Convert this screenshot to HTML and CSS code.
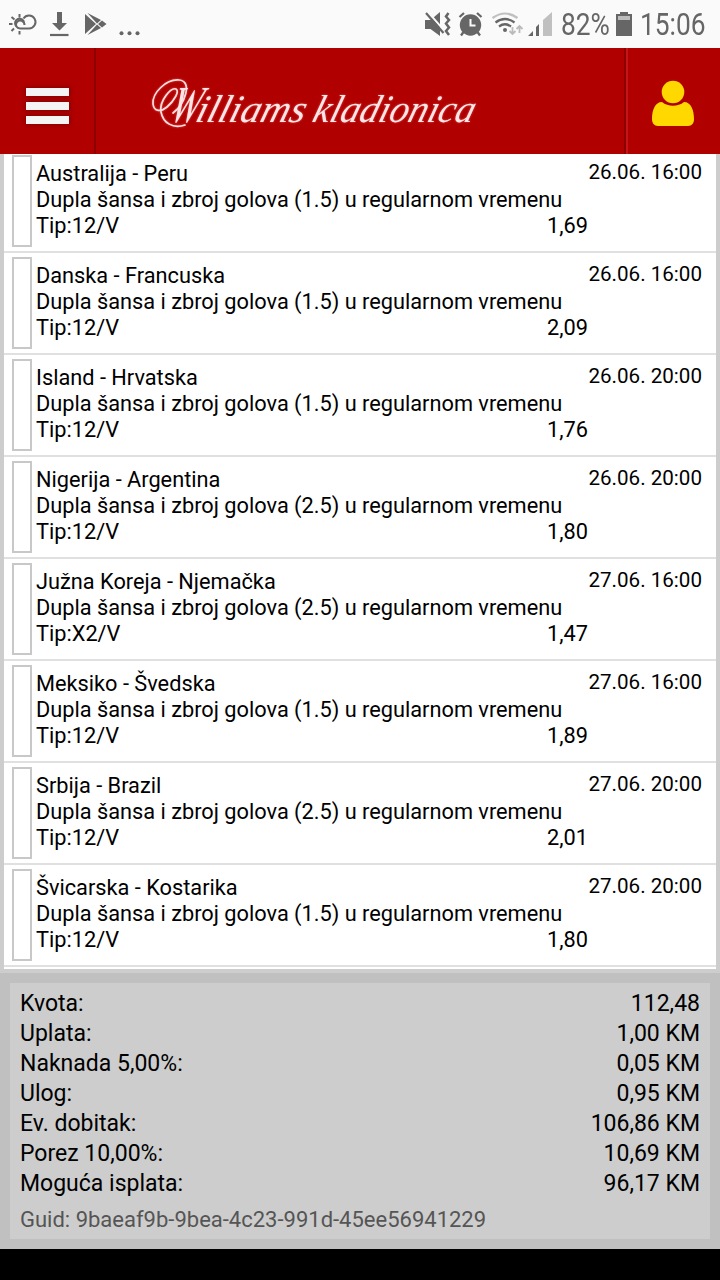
FILE: index.html
```
<!DOCTYPE html>
<html lang="hr">
<head>
    <meta charset="UTF-8">
    <meta name="viewport" content="width=device-width, initial-scale=1.0">
    <title>Williams kladionica</title>
    <link rel="stylesheet" href="styles.css">
</head>
<body>
    <div class="status-bar">
        <svg class="status-left" width="150" height="48" viewBox="0 0 150 48" fill="none" stroke="#666">
            <!-- weather -->
            <path d="M16 26a4.500 4.500 0 1 1 8 -3M19.500 14v3.500M11.500 17l3 2.500M9 24h3.500M11.500 31l2.500-2.500M19.500 31v3.500" stroke-width="2"/>
            <path d="M24.500 25a4.300 4.300 0 0 0-7.500-3c-2.500 3.500 0 6.500 3 6.500h9a6.500 6.500 0 1 0-5.500-10" stroke-width="2"/>
            <!-- download -->
            <path d="M57 12h5v11h5l-7.500 7.500-7.500-7.500h5z" fill="#666" stroke="none"/>
            <path d="M50 35h18.500" stroke-width="2.200"/>
            <!-- play store -->
            <path d="M85 14l11 10-11 10zM87.500 13l13.500 7-4 3.500zM87.500 35l13.500-7-4-3.500zM98 24l4-3.500 4.500 3.500-4.500 3.500z" fill="#666" stroke="none"/>
            <g fill="#666" stroke="none"><circle cx="121.500" cy="33.300" r="2"/><circle cx="129.500" cy="33.300" r="2"/><circle cx="137.500" cy="33.300" r="2"/></g>
        </svg>
        <div class="status-right">
            <svg width="136" height="48" viewBox="420 0 136 48" fill="#666">
                <!-- muted, vibrating -->
                <path d="M425 20h5.500l9.500-8v24l-9.500-7h-5.500z"/>
                <path d="M427.500 11.500l17 19.500" stroke="#fafafa" stroke-width="2"/>
                <path d="M426 13l17.500 20" stroke="#666" stroke-width="2.200"/>
                <path d="M448.500 13l-2.500 3.500 3 3.500-3 3.500 3 4-3 3.500 3 4" fill="none" stroke="#666" stroke-width="2.500"/>
                <!-- alarm -->
                <circle cx="470.500" cy="25" r="10.700"/>
                <path d="M459.500 17l4.500-4M481.500 17l-4.500-4M463.500 32l-2.500 3.500M477.500 32l2.500 3.500" stroke="#666" stroke-width="2.300"/>
                <path d="M470.500 19v6.500h5" fill="none" stroke="#fafafa" stroke-width="2"/>
                <!-- wifi -->
                <g fill="none" stroke-width="2.200">
                    <path d="M492.500 18q12.500-9 25 0" stroke="#c0c0c0"/>
                    <path d="M495.500 22.500q9.500-7 19 0M499 26.500q6-4.500 12 0" stroke="#666"/>
                    <path d="M512.500 27v7m-3-3l3 3 3-3M519.500 33v-7m-3 3l3-3 3 3" stroke="#bbb" stroke-width="1.800"/>
                </g>
                <circle cx="505" cy="30" r="2"/>
                <!-- signal -->
                <path d="M528 36l5-5v5zM536 36v-9l3-3v12z"/>
                <path d="M543 36V20l9-8v24z" fill="#c0c0c0"/>
            </svg>
            <span class="status-text battery-text">82%</span>
            <svg class="battery" width="17" height="48" viewBox="615 0 17 48">
                <path d="M616 14h4v-2h8v2h4v22h-16z" fill="#666"/>
                <path d="M618 16h12v4h-12z" fill="#bbb"/>
            </svg>
            <span class="status-text clock">15:06</span>
        </div>
    </div>

    <header class="header">
        <div class="menu-button">
            <div class="menu-bar"></div>
            <div class="menu-bar"></div>
            <div class="menu-bar"></div>
        </div>
        <div class="brand">
            <svg class="logo" width="340" height="66" viewBox="145 68 340 66">
                <!-- swash round the capital -->
                <path d="M173 113c12-9 20-32 6-33-13-1-27 13-26 24 1 8 8 8 14 3 7-6 13-16 9-18-5-2-17 12-15 23 2 11 12 17 24 13" fill="none" stroke="#ffe0e0" stroke-width="1.700" stroke-linecap="round"/>
                <g transform="translate(0 122) skewX(-16)">
                    <text x="168" y="0" class="logo-text capital" textLength="29" lengthAdjust="spacingAndGlyphs">W</text>
                    <text x="194" y="0" class="logo-text" textLength="109" lengthAdjust="spacingAndGlyphs">illiams</text>
                    <text x="311" y="0" class="logo-text" textLength="161" lengthAdjust="spacingAndGlyphs">kladionica</text>
                </g>
            </svg>
        </div>
        <div class="user-button">
            <svg width="46" height="50" viewBox="650 78 46 50" fill="#ffd800">
                <path d="M662 102c-7 0-10 8-10 17 0 4 2 7 6 7h30c4 0 6-3 6-7 0-9-3-17-10-17-6 5-16 5-22 0z"/>
                <circle cx="673" cy="92" r="12.300" fill="#b00000"/>
                <circle cx="673" cy="92" r="11.300"/>
            </svg>
        </div>
    </header>

    <main class="bets">
        <div class="bet">
            <div class="mark"></div>
            <div class="info"><div>Australija - Peru</div><div>Dupla šansa i zbroj golova (1.5) u regularnom vremenu</div><div class="tip"><span>Tip:12/V</span><span>1,69</span></div></div>
            <div class="date">26.06. 16:00</div>
        </div>
        <div class="bet">
            <div class="mark"></div>
            <div class="info"><div>Danska - Francuska</div><div>Dupla šansa i zbroj golova (1.5) u regularnom vremenu</div><div class="tip"><span>Tip:12/V</span><span>2,09</span></div></div>
            <div class="date">26.06. 16:00</div>
        </div>
        <div class="bet">
            <div class="mark"></div>
            <div class="info"><div>Island - Hrvatska</div><div>Dupla šansa i zbroj golova (1.5) u regularnom vremenu</div><div class="tip"><span>Tip:12/V</span><span>1,76</span></div></div>
            <div class="date">26.06. 20:00</div>
        </div>
        <div class="bet">
            <div class="mark"></div>
            <div class="info"><div>Nigerija - Argentina</div><div>Dupla šansa i zbroj golova (2.5) u regularnom vremenu</div><div class="tip"><span>Tip:12/V</span><span>1,80</span></div></div>
            <div class="date">26.06. 20:00</div>
        </div>
        <div class="bet">
            <div class="mark"></div>
            <div class="info"><div>Južna Koreja - Njemačka</div><div>Dupla šansa i zbroj golova (2.5) u regularnom vremenu</div><div class="tip"><span>Tip:X2/V</span><span>1,47</span></div></div>
            <div class="date">27.06. 16:00</div>
        </div>
        <div class="bet">
            <div class="mark"></div>
            <div class="info"><div>Meksiko - Švedska</div><div>Dupla šansa i zbroj golova (1.5) u regularnom vremenu</div><div class="tip"><span>Tip:12/V</span><span>1,89</span></div></div>
            <div class="date">27.06. 16:00</div>
        </div>
        <div class="bet">
            <div class="mark"></div>
            <div class="info"><div>Srbija - Brazil</div><div>Dupla šansa i zbroj golova (2.5) u regularnom vremenu</div><div class="tip"><span>Tip:12/V</span><span>2,01</span></div></div>
            <div class="date">27.06. 20:00</div>
        </div>
        <div class="bet">
            <div class="mark"></div>
            <div class="info"><div>Švicarska - Kostarika</div><div>Dupla šansa i zbroj golova (1.5) u regularnom vremenu</div><div class="tip"><span>Tip:12/V</span><span>1,80</span></div></div>
            <div class="date">27.06. 20:00</div>
        </div>
    </main>

    <section class="summary">
        <div class="summary-box">
            <div class="line"><span>Kvota:</span><span>112,48</span></div>
            <div class="line"><span>Uplata:</span><span>1,00 KM</span></div>
            <div class="line"><span>Naknada 5,00%:</span><span>0,05 KM</span></div>
            <div class="line"><span>Ulog:</span><span>0,95 KM</span></div>
            <div class="line"><span>Ev. dobitak:</span><span>106,86 KM</span></div>
            <div class="line"><span>Porez 10,00%:</span><span>10,69 KM</span></div>
            <div class="line"><span>Moguća isplata:</span><span>96,17 KM</span></div>
            <div class="guid">Guid: 9baeaf9b-9bea-4c23-991d-45ee56941229</div>
        </div>
    </section>
</body>
</html>
```
FILE: styles.css
```
* {
    box-sizing: border-box;
}
body {
    margin: 0;
    width: 720px;
    height: 1280px;
    overflow: hidden;
    background-color: #000;
    color: #000;
    font-family: Roboto, sans-serif;
}
svg {
    display: block;
}
.status-bar {
    height: 48px;
    background-color: #fafafa;
    display: flex;
    justify-content: space-between;
}
.status-right {
    display: flex;
    width: 300px;
}
.status-text {
    color: #666;
    font-size: 31px;
    line-height: 50px;
    white-space: nowrap;
    transform-origin: left center;
    transform: scaleX(0.85);
}
.battery-text {
    width: 59px;
    margin-left: 5px;
}
.battery {
    flex: none;
    margin-left: -5px;
}
.clock {
    margin-left: 8px;
}
.header {
    height: 106px;
    background-color: #b00000;
    display: flex;
}
.menu-button {
    width: 96px;
    border-right: 2px solid #8c0000;
    padding: 40px 0 0 26px;
    display: flex;
    flex-direction: column;
    gap: 6px;
}
.menu-bar {
    width: 43px;
    height: 8px;
    background-color: #f4f4f4;
    box-shadow: 0 0 4px 1px #870000;
}
.brand {
    flex: 1;
    padding: 20px 0 0 49px;
}
.logo {
    filter: drop-shadow(0 0 1px #e05050);
}
.logo-text {
    font-family: "Liberation Serif", serif;
    font-style: italic;
    font-size: 39px;
    fill: #ffe6e6;
}
.capital {
    font-size: 52px;
}
.user-button {
    width: 96px;
    border-left: 2px solid #8c0000;
    box-shadow: inset 2px 0 0 #c81414;
    padding: 30px 0 0 24px;
}
.bets {
    height: 819px;
    overflow: hidden;
    background-color: #fff;
    border: solid #cdcdcd;
    border-width: 0 4px 4px;
    display: flex;
    flex-direction: column;
    justify-content: flex-end;
    padding-bottom: 2px;
}
.bet {
    flex: none;
    height: 102px;
    border-bottom: 2px solid #e0e0e0;
    padding: 4px 14px 4px 8px;
    display: flex;
    font-size: 21.76px;
    line-height: 26px;
    white-space: nowrap;
}
.mark {
    flex: none;
    width: 20px;
    height: 92px;
    border: 2px solid #c8c8c8;
    margin-right: 4px;
}
.info {
    flex: none;
    width: 552px;
    padding-top: 6px;
}
.tip {
    display: flex;
    justify-content: space-between;
}
.date {
    flex: 1;
    display: flex;
    justify-content: flex-end;
    padding-top: 4px;
    font-size: 20.6px;
}
.summary {
    height: 276px;
    background-color: #c0c0c0;
    padding: 10px;
}
.summary-box {
    height: 256px;
    background-color: #cdcdcd;
    padding: 6px 10px;
    font-size: 23px;
    line-height: 30px;
}
.line {
    display: flex;
    justify-content: space-between;
}
.guid {
    margin-top: 6px;
    font-size: 22px;
    color: #555;
}
```
